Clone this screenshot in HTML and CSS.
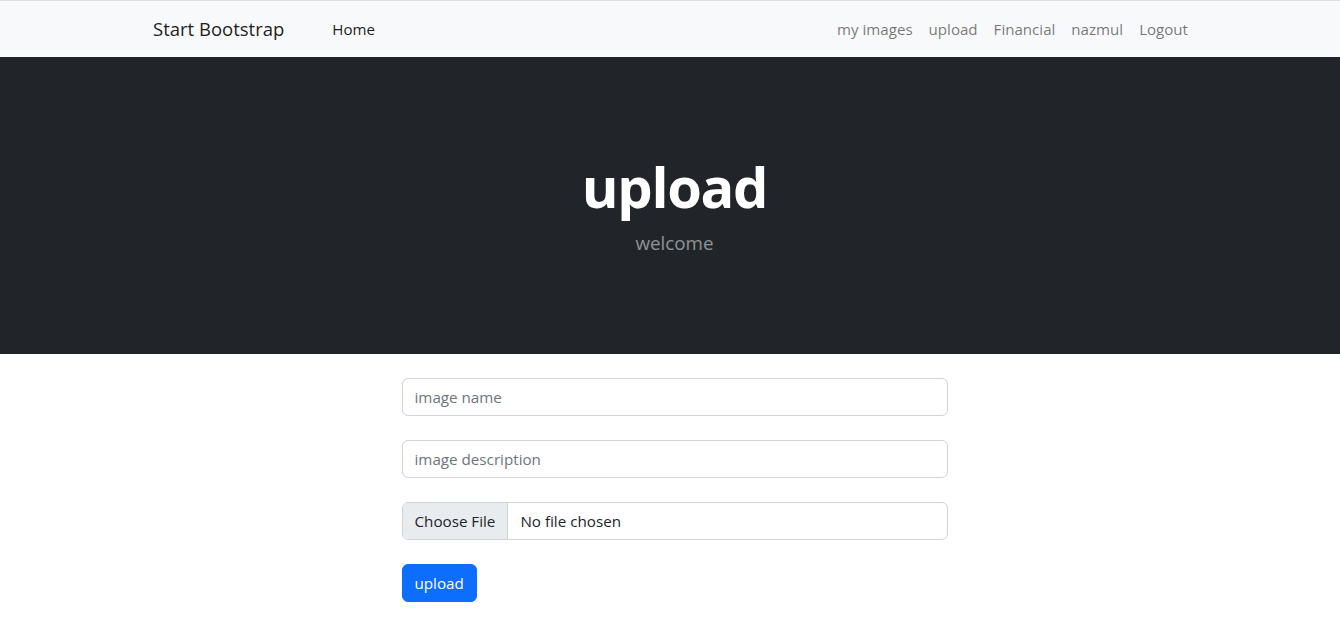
FILE: index.html
```html
<!DOCTYPE html>
<html lang="en">
<head>
<meta charset="utf-8">
<title>upload</title>
<link rel="stylesheet" href="styles.css">
</head>
<body>
<nav class="navbar">
  <div class="nav-container">
    <a class="brand" href="#">Start Bootstrap</a>
    <ul class="nav-left">
      <li><a class="nav-link active" href="#">Home</a></li>
    </ul>
    <ul class="nav-right">
      <li><a class="nav-link" href="#">my images</a></li>
      <li><a class="nav-link" href="#">upload</a></li>
      <li><a class="nav-link" href="#">Financial</a></li>
      <li><a class="nav-link" href="#">nazmul</a></li>
      <li><a class="nav-link" href="#">Logout</a></li>
    </ul>
  </div>
</nav>
<header class="hero">
  <div class="hero-inner">
    <h1 class="hero-title">upload</h1>
    <p class="hero-lead">welcome</p>
  </div>
</header>
<main class="main">
  <form class="upload-form">
    <input class="form-control" type="text" placeholder="image name">
    <input class="form-control" type="text" placeholder="image description">
    <div class="file-control">
      <span class="file-btn">Choose File</span>
      <span class="file-text">No file chosen</span>
    </div>
    <button class="btn-primary" type="button">upload</button>
  </form>
</main>
</body>
</html>
```

FILE: styles.css
```css
* { box-sizing: border-box; }
html, body { margin: 0; padding: 0; }
body {
  font-family: "Open Sans", "Noto Sans", sans-serif;
  font-size: 15.2px;
  line-height: 1.5;
  color: #212529;
  background: #fff;
}
a { text-decoration: none; }
ul { list-style: none; margin: 0; padding: 0; }

.navbar {
  background: #f8f9fa;
  border-top: 1px solid #dcdfe2;
  height: 57px;
}
.nav-container {
  width: 1140px;
  margin: 0 auto;
  padding: 0 44px 0 53px;
  height: 56px;
  display: flex;
  align-items: center;
}
.brand {
  font-size: 18.5px;
  color: rgba(0,0,0,.9);
  margin-right: 40px;
}
.nav-left { display: flex; margin-right: auto; }
.nav-right { display: flex; }
.nav-link {
  display: block;
  padding: 8px 8px;
  font-size: 15.1px;
  color: rgba(0,0,0,.55);
}
.nav-link.active { color: rgba(0,0,0,.9); }

.hero {
  background: #212529;
  padding: 96px 0 96px 9px;
  text-align: center;
}
.hero-title {
  margin: 0 0 8px;
  font-size: 56px;
  font-weight: 700;
  line-height: 67px;
  color: #fff;
  letter-spacing: -1.3px;
}
.hero-lead {
  margin: 0;
  font-size: 18.8px;
  line-height: 30px;
  color: rgba(255,255,255,.5);
}

.main {
  display: flex;
  justify-content: center;
  padding: 24px 0 0 9px;
}
.upload-form {
  width: 546px;
  display: flex;
  flex-direction: column;
  align-items: flex-start;
  gap: 24px;
}
.form-control {
  display: block;
  width: 100%;
  height: 38px;
  padding: 6px 12px;
  font-family: inherit;
  font-size: 15.2px;
  color: #212529;
  border: 1px solid #ced4da;
  border-radius: 6px;
  background: #fff;
  outline: none;
}
.form-control::placeholder { color: #6c757d; }
.file-control {
  display: flex;
  width: 100%;
  height: 38px;
  border: 1px solid #ced4da;
  border-radius: 6px;
  overflow: hidden;
}
.file-btn {
  display: flex;
  align-items: center;
  padding: 0 12px;
  background: #e9ecef;
  border-right: 1px solid #ced4da;
  color: #212529;
}
.file-text {
  display: flex;
  align-items: center;
  padding: 0 12px;
  color: #212529;
}
.btn-primary {
  height: 38px;
  padding: 6px 12px;
  font-family: inherit;
  font-size: 15.2px;
  line-height: 1.5;
  color: #fff;
  background: #0d6efd;
  border: 1px solid #0d6efd;
  border-radius: 6px;
}
```
